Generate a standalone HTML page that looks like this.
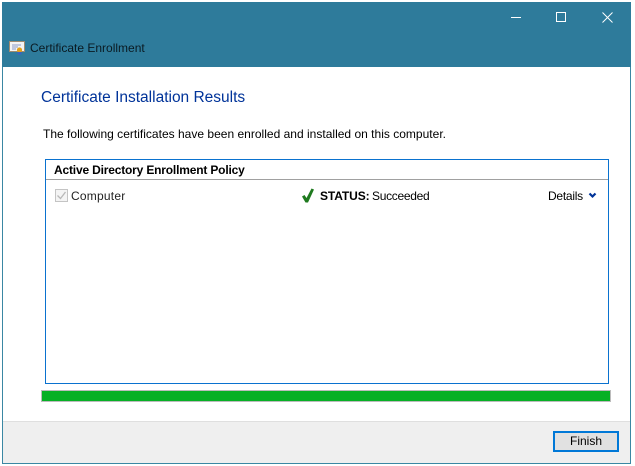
<!DOCTYPE html>
<html>
<head>
<meta charset="utf-8">
<style>
html,body{margin:0;padding:0;background:#fff;}
body{width:635px;height:466px;position:relative;overflow:hidden;font-family:"Liberation Sans",sans-serif;font-size:12px;color:#000;}
div,span{position:absolute;box-sizing:border-box;}
.t{white-space:nowrap;line-height:16px;height:16px;}
</style>
</head>
<body>
<div style="left:2px;top:2px;width:629px;height:462px;border:1px solid #3a87a3;background:#fff;"></div>
<div style="left:2px;top:2px;width:629px;height:65px;background:#2e7b9b;"></div>
<svg style="position:absolute;left:0;top:0" width="635" height="70">
<rect x="511" y="17" width="10" height="1" fill="#fff"/>
<rect x="556.5" y="12.5" width="9" height="9" fill="none" stroke="#fff"/>
<path d="M602.5 12.5l10 10M612.5 12.5l-10 10" stroke="#fff" stroke-width="1" fill="none"/>
<rect x="9.5" y="41.5" width="15" height="10" fill="#f4f4f4" stroke="#a08b70"/>
<path d="M12 45h9M12 47h6M12 49h4" stroke="#8a9ac8"/>
<circle cx="19.5" cy="50" r="2.6" fill="#e2a11a"/>
<rect x="17.5" y="52" width="4" height="2.5" fill="#3a62c4"/>
</svg>
<div class="t" style="left:30px;top:40px;font-size:12px;color:#0a1a22;">Certificate Enrollment</div>

<div class="t" style="left:41px;top:90px;font-size:15.5px;color:#003399;">Certificate Installation Results</div>
<div class="t" style="left:43px;top:126px;font-size:12px;letter-spacing:.01px;">The following certificates have been enrolled and installed on this computer.</div>

<div style="left:45px;top:159px;width:564px;height:225px;border:1px solid #0a72cf;background:#fff;"></div>
<div style="left:46px;top:179px;width:562px;height:1px;background:#a0a0a0;"></div>
<div class="t" style="left:54px;top:162px;font-weight:bold;font-size:12px;letter-spacing:-.18px;">Active Directory Enrollment Policy</div>

<div style="left:55px;top:189px;width:13px;height:13px;border:1px solid #c4c4c4;background:#f4f4f4;"></div>
<svg style="position:absolute;left:55px;top:189px" width="13" height="13"><path d="M2.5 6.5l3 3 5-6.5" fill="none" stroke="#b8b8b8" stroke-width="1.3"/></svg>
<div class="t" style="left:71px;top:188px;color:#222;letter-spacing:.22px;">Computer</div>

<svg style="position:absolute;left:300px;top:187px" width="16" height="18"><path d="M2 9.5L4.5 8 6.5 11 11.5 1.5 14 2.5 8 15.5 5.5 15.5z" fill="#1f7a1f"/></svg>
<div class="t" style="left:320px;top:188px;font-weight:bold;letter-spacing:-.1px;">STATUS:</div>
<div class="t" style="left:372px;top:188px;letter-spacing:-.3px;">Succeeded</div>
<div class="t" style="left:548px;top:188px;letter-spacing:-.25px;">Details</div>
<svg style="position:absolute;left:588px;top:192px" width="10" height="8"><path d="M1.5 1.5L4.5 4.5 7.5 1.5" fill="none" stroke="#003399" stroke-width="2.2"/></svg>

<div style="left:41px;top:390px;width:570px;height:12px;border:1px solid #bcbcbc;background:#06b025;"></div>

<div style="left:3px;top:421px;width:627px;height:42px;background:#efefef;border-top:1px solid #dfdfdf;"></div>
<div style="left:553px;top:431px;width:66px;height:21px;border:2px solid #0078d7;background:#e1e1e1;"></div>
<div class="t" style="left:553px;top:433px;width:66px;text-align:center;">Finish</div>
</body>
</html>
